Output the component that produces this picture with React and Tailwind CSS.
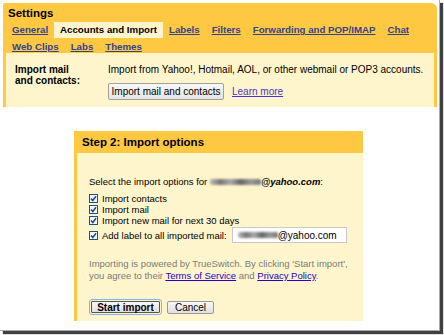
import React from "react";

const Check = () => (
  <svg width="9" height="9" viewBox="0 0 9 9" className="shrink-0">
    <rect x="0.5" y="0.5" width="8" height="8" fill="#f4f6fa" stroke="#1c5180" />
    <path d="M2 4.5 L3.8 6.5 L7 2.2" fill="none" stroke="#21449c" strokeWidth="1.5" />
  </svg>
);

const Blur = ({ w }) => (
  <span
    className={`inline-block h-[6px] align-middle blur-[0.8px] bg-[linear-gradient(90deg,#bbb,#777_20%,#aaa_40%,#666_60%,#999_80%,#777)] rounded-[2px]`}
    style={{ width: w }}
  />
);

export default function App() {
  const tab = "px-[6px] text-[#33438f] underline font-bold";
  return (
    <div
      className="w-[444px] h-[335px] bg-white text-black"
      style={{ fontFamily: '"Liberation Sans", Arial, sans-serif' }}
    >
      <div className="w-[440px] h-[331px] bg-white border-r border-b border-[#aaa] shadow-[3px_3px_1px_rgba(0,0,0,0.75)] p-[3px]">
        {/* Settings panel */}
        <div className="w-[434px] h-[104px] bg-[#ffc843] rounded-tr-[6px] rounded-tl-[2px] flex flex-col">
          <div className="h-[19px] pl-[5px] pt-[2px] text-[11.5px] font-bold leading-[16px]">Settings</div>
          <div className="h-[16px] flex pl-[3px] text-[9.7px] leading-[16px]">
            <span className={tab}>General</span>
            <span className="px-[6px] font-bold bg-[#fff5cc]">Accounts and Import</span>
            <span className={tab}>Labels</span>
            <span className={tab}>Filters</span>
            <span className={tab}>Forwarding and POP/IMAP</span>
            <span className={tab}>Chat</span>
          </div>
          <div className="h-[15px] flex pl-[3px] pt-[2px] text-[9.7px] leading-[13px]">
            <span className={tab}>Web Clips</span>
            <span className={tab}>Labs</span>
            <span className={tab}>Themes</span>
          </div>
          <div className="ml-[3px] w-[428px] flex-1 bg-[#fff5cc] flex">
            <div className="w-[93px] pl-[9px] pt-[11px] text-[10px] font-bold leading-[11px]">
              Import mail
              <br />
              and contacts:
            </div>
            <div className="pt-[11px] pl-[9px] flex flex-col">
              <div className="text-[10px] leading-[12px]">
                Import from Yahoo!, Hotmail, AOL, or other webmail or POP3 accounts.
              </div>
              <div className="mt-[7px] flex items-center gap-[8px]">
                <span className="h-[17px] w-[116px] flex items-center justify-center text-[10px] border border-[#a0a0a0] rounded-[2px] bg-[linear-gradient(#f8f8f8,#e4e4e4)]">
                  Import mail and contacts
                </span>
                <span className="text-[10px] text-[#4a33d4] underline">Learn more</span>
              </div>
            </div>
          </div>
        </div>

        {/* Step 2 panel */}
        <div className="ml-[71px] mt-[24px] w-[289px]">
          <div className="h-[22px] bg-[#ffc843] pl-[8px] text-[11.5px] font-bold leading-[22px]">
            Step 2: Import options
          </div>
          <div className="h-[168px] border-l-[3px] border-[#ffc843] bg-[#fff5cc] pl-[12px] pt-[23px] text-[9.5px]">
            <div className="leading-[12px] flex items-center">
              <span>Select the import options for&nbsp;</span>
              <Blur w={51} />
              <span className="font-bold italic">@yahoo.com</span>
              <span>:</span>
            </div>
            <div className="mt-[5px] flex flex-col leading-[11px]">
              <div className="flex items-center gap-[4px] h-[11px]">
                <Check />
                <span>Import contacts</span>
              </div>
              <div className="flex items-center gap-[4px] h-[11px]">
                <Check />
                <span>Import mail</span>
              </div>
              <div className="flex items-center gap-[4px] h-[11px]">
                <Check />
                <span>Import new mail for next 30 days</span>
              </div>
              <div className="mt-[1px] flex items-center gap-[4px] h-[16px]">
                <Check />
                <span>Add label to all imported mail:</span>
                <span className="ml-[1px] w-[115px] h-[16px] bg-white border border-[#c8c8c8] flex items-center pl-[5px] text-[10px]">
                  <Blur w={40} />
                  <span>@yahoo.com</span>
                </span>
              </div>
            </div>
            <div className="mt-[15px] text-[#7a7a7a] leading-[12px]">
              Importing is powered by TrueSwitch. By clicking 'Start import',
              <br />
              you agree to their <span className="text-[#2200cc] underline">Terms of Service</span> and{" "}
              <span className="text-[#2200cc] underline">Privacy Policy</span>.
            </div>
            <div className="mt-[17px] flex items-center gap-[5px]">
              <span className="h-[16px] w-[73px] rounded-[3px] border border-[#7eb4ea] flex p-[1px]">
                <span className="flex-1 flex items-center justify-center border border-[#555] rounded-[1px] bg-[linear-gradient(#f8f8f8,#e0e0e0)] text-[10px] font-bold">
                  Start import
                </span>
              </span>
              <span className="h-[13px] w-[47px] flex items-center justify-center border border-[#999] rounded-[2px] bg-[linear-gradient(#f8f8f8,#e0e0e0)] text-[10px]">
                Cancel
              </span>
            </div>
          </div>
        </div>
      </div>
    </div>
  );
}
